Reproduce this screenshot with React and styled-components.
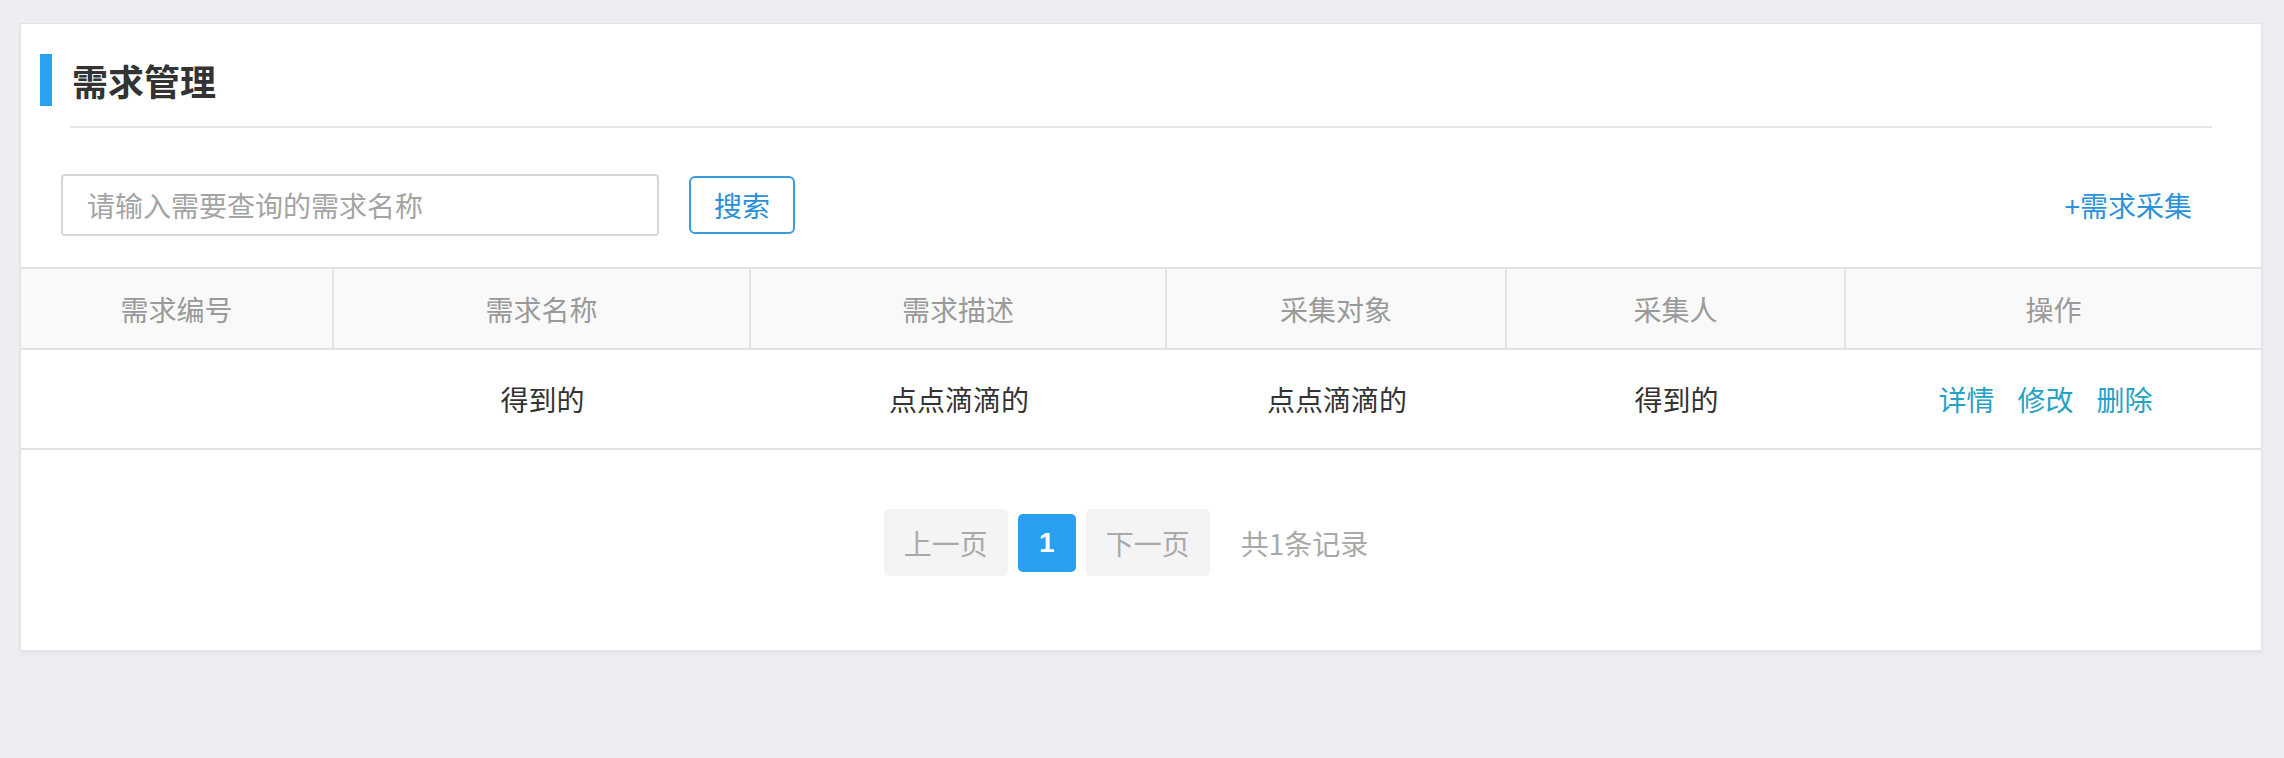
import React from "react";
import styled, { createGlobalStyle } from "styled-components";

const GlobalStyle = createGlobalStyle`
  body {
    margin: 0;
    background: #edeef1;
    font-family: "Noto Sans CJK SC", "Noto Sans", sans-serif;
  }
`;

const columns = ["需求编号", "需求名称", "需求描述", "采集对象", "采集人", "操作"];
const colWidths = "313px 417px 416px 340px 339px 1fr";

const rows = [
  { id: "", name: "得到的", desc: "点点滴滴的", target: "点点滴滴的", person: "得到的" },
];

const App = () => {
  return (
    <>
      <GlobalStyle />
      <Page>
        <Card>
          <TitleBar>
            <Accent />
            <Title>需求管理</Title>
          </TitleBar>
          <Divider />
          <Toolbar>
            <SearchGroup>
              <SearchInput placeholder="请输入需要查询的需求名称" />
              <SearchButton>搜索</SearchButton>
            </SearchGroup>
            <AddLink>+需求采集</AddLink>
          </Toolbar>
          <Table>
            <HeadRow>
              {columns.map((c, i) => (
                <HeadCell key={c} last={i === columns.length - 1}>
                  {c}
                </HeadCell>
              ))}
            </HeadRow>
            {rows.map((r, idx) => (
              <BodyRow key={idx}>
                <Cell>{r.id}</Cell>
                <Cell>{r.name}</Cell>
                <Cell>{r.desc}</Cell>
                <Cell>{r.target}</Cell>
                <Cell>{r.person}</Cell>
                <Cell>
                  <Actions>
                    <ActionLink>详情</ActionLink>
                    <ActionLink>修改</ActionLink>
                    <ActionLink>删除</ActionLink>
                  </Actions>
                </Cell>
              </BodyRow>
            ))}
          </Table>
          <Pager>
            <PageButton>上一页</PageButton>
            <PageNumber active>1</PageNumber>
            <PageButton>下一页</PageButton>
            <Total>共1条记录</Total>
          </Pager>
        </Card>
      </Page>
    </>
  );
};

export default App;

const Page = styled.div`
  padding: 23px 22px 106px 20px;
`;

const Card = styled.div`
  background: #fff;
  border: 1px solid #e2e3e5;
  box-shadow: 0 2px 4px rgba(0, 0, 0, 0.05);
`;

const TitleBar = styled.div`
  display: flex;
  align-items: center;
  padding: 30px 0 0 19px;
`;

const Accent = styled.span`
  width: 12px;
  height: 52px;
  background: #2aa2f0;
`;

const Title = styled.h2`
  margin: 0 0 0 20px;
  font-size: 36px;
  line-height: 52px;
  font-weight: bold;
  color: #333;
`;

const Divider = styled.div`
  margin: 20px 49px 0 49px;
  height: 2px;
  background: #e5e6e8;
`;

const Toolbar = styled.div`
  display: flex;
  align-items: center;
  justify-content: space-between;
  padding: 46px 69px 31px 40px;
`;

const SearchGroup = styled.div`
  display: flex;
  align-items: center;
  gap: 30px;
`;

const SearchInput = styled.input`
  box-sizing: border-box;
  width: 598px;
  height: 62px;
  padding: 0 24px;
  border: 2px solid #d3d6da;
  border-radius: 4px;
  font-family: inherit;
  font-size: 28px;
  color: #333;
  outline: none;

  &::placeholder {
    color: #a4a4a4;
  }
`;

const SearchButton = styled.button`
  box-sizing: border-box;
  width: 106px;
  height: 58px;
  border: 2px solid #3a9be0;
  border-radius: 6px;
  background: #fff;
  font-family: inherit;
  font-size: 28px;
  color: #2b8fd8;
  cursor: pointer;
`;

const AddLink = styled.a`
  font-size: 28px;
  line-height: 40px;
  color: #2b93de;
  cursor: pointer;
`;

const Table = styled.div`
  border-top: 2px solid #e2e2e2;
`;

const HeadRow = styled.div`
  display: grid;
  grid-template-columns: ${colWidths};
  height: 79px;
  background: #f9f9f9;
  border-bottom: 2px solid #e2e2e2;
`;

const HeadCell = styled.div`
  display: flex;
  align-items: center;
  justify-content: center;
  font-size: 28px;
  color: #9a9a9a;
  border-right: ${(props) => (props.last ? "none" : "2px solid #e2e2e2")};
`;

const BodyRow = styled.div`
  display: grid;
  grid-template-columns: ${colWidths};
  height: 98px;
  border-bottom: 2px solid #e2e2e2;
`;

const Cell = styled.div`
  display: flex;
  align-items: center;
  justify-content: center;
  font-size: 28px;
  color: #333;
`;

const Actions = styled.div`
  display: flex;
  gap: 23px;
  margin-right: 16px;
`;

const ActionLink = styled.a`
  color: #27a1c4;
  cursor: pointer;
`;

const Pager = styled.div`
  display: flex;
  align-items: center;
  justify-content: center;
  gap: 10px;
  padding: 59px 30px 74px 0;
`;

const PageButton = styled.button`
  box-sizing: border-box;
  width: 124px;
  height: 67px;
  border: none;
  border-radius: 5px;
  background: #f4f4f5;
  font-family: inherit;
  font-size: 28px;
  color: #a9a9a9;
`;

const PageNumber = styled.button`
  box-sizing: border-box;
  width: 58px;
  height: 58px;
  border: none;
  border-radius: 5px;
  background: ${(props) => (props.active ? "#28a0ef" : "#f4f4f5")};
  font-family: "Liberation Sans", "Noto Sans", sans-serif;
  font-size: 28px;
  font-weight: bold;
  color: ${(props) => (props.active ? "#fff" : "#a9a9a9")};
`;

const Total = styled.span`
  margin-left: 21px;
  font-size: 28px;
  color: #a9a9a9;
`;
